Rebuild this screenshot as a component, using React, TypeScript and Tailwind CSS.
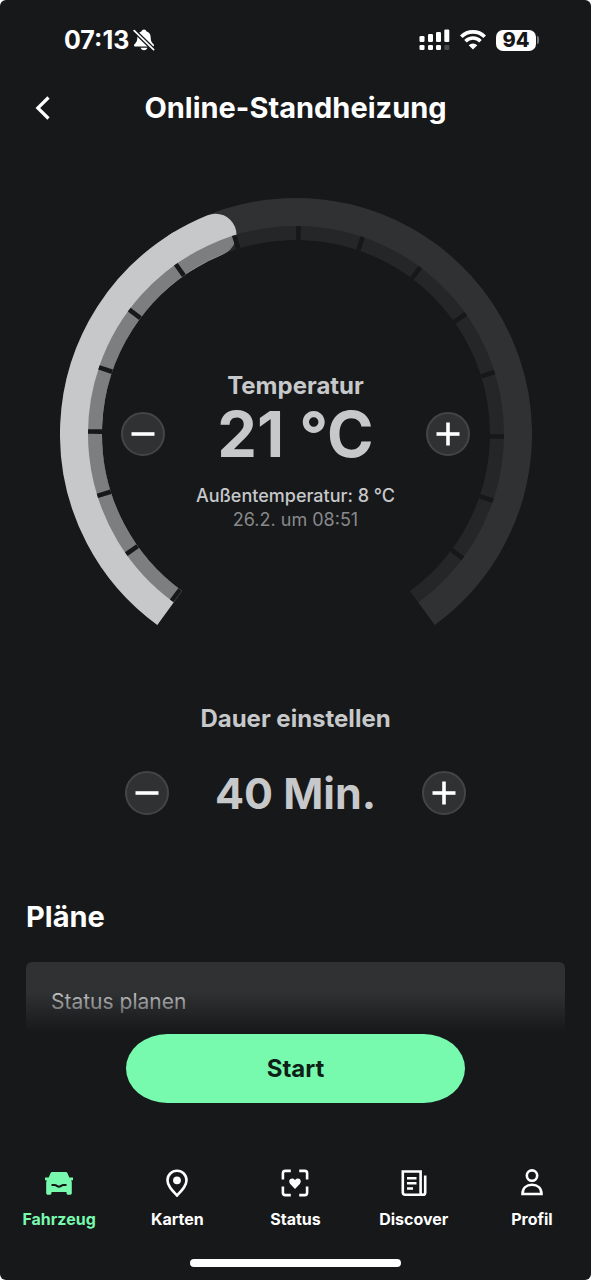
import React, { useState } from 'react';

// Gauge geometry, angles in degrees clockwise from three o'clock
const CENTER = 236;
const START_ANGLE = 126;
const END_ANGLE = 414;
const TICK_STEP = 18;

const polar = (radius: number, angle: number) => {
  const rad = (angle * Math.PI) / 180;
  return { x: CENTER + radius * Math.cos(rad), y: CENTER + radius * Math.sin(rad) };
};

const arcPath = (radius: number, from: number, to: number) => {
  const a = polar(radius, from);
  const b = polar(radius, to);
  const large = to - from > 180 ? 1 : 0;
  return `M ${a.x} ${a.y} A ${radius} ${radius} 0 ${large} 1 ${b.x} ${b.y}`;
};

const BellOffIcon: React.FC = () => (
  <svg viewBox="0 0 22 22" className="h-[22px] w-[22px]" aria-hidden="true">
    <path
      fill="#fff"
      d="M11 0.600c-1.300 0-2.100.8-2.300 1.700C5.800 3.200 4.300 5.500 4.300 8.500c0 3.300-.8 4.700-2.300 6.200-.7.7-1 1.100-1 1.600 0 .8.600 1.200 1.500 1.200h17c.9 0 1.500-.4 1.500-1.200 0-.5-.3-.9-1-1.600-1.500-1.500-2.300-2.900-2.300-6.200 0-3-1.500-5.300-4.400-6.200C13.100 1.400 12.300.6 11 .6zM7.600 18.700c.4 1.500 1.700 2.500 3.400 2.500s3-1 3.400-2.500z"
    />
    <path d="M1 1.500 20.800 20.800" stroke="#17181a" strokeWidth="4.400" />
    <path d="M1.200 1.700 20.600 20.600" stroke="#fff" strokeWidth="1.700" strokeLinecap="round" />
  </svg>
);

const SignalIcon: React.FC = () => (
  <svg viewBox="0 0 31 22" className="h-[22px] w-[31px]" fill="#fff" aria-hidden="true">
    <rect x="0.500" y="7" width="5" height="6" rx="1.200" />
    <rect x="9" y="5" width="5" height="8" rx="1.200" />
    <rect x="17" y="3" width="5" height="10" rx="1.200" />
    <rect x="25.300" y="0.500" width="5" height="12.500" rx="1.200" />
    <rect x="0.500" y="16" width="5" height="5" rx="1.200" />
    <rect x="9" y="16" width="5" height="5" rx="1.200" />
    <rect x="17" y="16" width="5" height="5" rx="1.200" />
    <rect x="25.300" y="16" width="5" height="5" rx="1.200" fill="#4a4b4d" />
  </svg>
);

const WifiIcon: React.FC = () => (
  <svg viewBox="0 0 26 20" className="h-5 w-[26px]" fill="none" stroke="#fff" aria-hidden="true">
    <path d="M1.300 6.800a16.500 16.500 0 0 1 23.400 0" strokeWidth="3.700" />
    <path d="M5.500 11.200a10.600 10.600 0 0 1 15 0" strokeWidth="3.500" />
    <path d="M13 19.600 8.700 15.200a6.100 6.100 0 0 1 8.600 0z" fill="#fff" stroke="none" />
  </svg>
);

const StatusBar: React.FC = () => (
  <div className="flex h-20 items-center justify-between pl-16 pr-[52px]">
    <div className="flex items-center gap-1">
      <span className="text-[25px] font-bold leading-8">07:13</span>
      <BellOffIcon />
    </div>
    <div className="flex items-center gap-[10px]">
      <SignalIcon />
      <WifiIcon />
      <div className="flex items-center gap-px">
        <span className="flex h-[21px] w-10 items-center justify-center rounded-[7px] bg-white text-[20px] font-extrabold leading-none text-[#17181a]">
          94
        </span>
        <span className="h-2 w-[2px] rounded-r-full bg-[#77787a]" />
      </div>
    </div>
  </div>
);

interface StepButtonProps {
  kind: 'minus' | 'plus';
  label: string;
  onClick: () => void;
}

const StepButton: React.FC<StepButtonProps> = ({ kind, label, onClick }) => (
  <button
    type="button"
    aria-label={label}
    onClick={onClick}
    className="flex h-11 w-11 shrink-0 items-center justify-center rounded-full border-2 border-[#444547] bg-[#303133]"
  >
    <svg viewBox="0 0 24 24" className="h-6 w-6" stroke="#fff" strokeWidth="3.600" aria-hidden="true">
      <path d="M0.500 12h23" />
      {kind === 'plus' && <path d="M12 0.500v23" />}
    </svg>
  </button>
);

const Gauge: React.FC<{ temperature: number }> = ({ temperature }) => {
  const valueAngle = 248 + (temperature - 21) * TICK_STEP;
  const ticks = Array.from({ length: 16 }, (_, i) => START_ANGLE + 0.7 + i * TICK_STEP);
  const capStart = Math.max(valueAngle - 10, START_ANGLE);

  return (
    <svg viewBox="0 0 472 428" className="col-start-1 row-start-1 w-full" fill="none" aria-hidden="true">
      <path d={arcPath(215, START_ANGLE, END_ANGLE)} stroke="#303133" strokeWidth="42" />
      {/* square end at the bottom, round cap at the current value */}
      <path d={arcPath(215, START_ANGLE, capStart + 1)} stroke="#c7c8ca" strokeWidth="42" />
      <path d={arcPath(215, capStart, valueAngle)} stroke="#c7c8ca" strokeWidth="42" strokeLinecap="round" />
      <path d={arcPath(201, START_ANGLE, END_ANGLE)} stroke="#17181a" strokeOpacity="0.42" strokeWidth="14" />
      {ticks.map((angle) => {
        const a = polar(194, angle);
        const b = polar(208, angle);
        return <path key={angle} d={`M ${a.x} ${a.y} L ${b.x} ${b.y}`} stroke="#17181a" strokeWidth="4.600" />;
      })}
      <path d={arcPath(201, START_ANGLE - 0.1, START_ANGLE + 0.200)} stroke="#303133" strokeWidth="14" />
    </svg>
  );
};

const CarIcon: React.FC = () => (
  <svg viewBox="0 0 28 28" className="h-7 w-7" aria-hidden="true">
    <path
      fill="#78faae"
      d="M7.200 3h13.600c.7 0 1.300.4 1.600 1.100L24.300 8.500H28v2.700h-1.800c.4.800.6 1.700.6 2.700v10c0 1.100-.7 1.800-1.800 1.800h-1.700c-1.100 0-1.800-.7-1.800-1.800v-.9h-15v.9c0 1.100-.7 1.800-1.800 1.800H3c-1.100 0-1.800-.7-1.800-1.800v-10c0-1 .2-1.900.6-2.700H0V8.500h3.700L5.600 4.100C5.900 3.400 6.500 3 7.200 3z"
    />
    <path d="M6.500 16h3.200c1.800 0 2.500 1.700 4.300 1.700s2.500-1.700 4.300-1.700h3.200" fill="none" stroke="#17181a" strokeWidth="2.200" />
  </svg>
);

const PinIcon: React.FC = () => (
  <svg viewBox="0 0 28 28" className="h-7 w-7" aria-hidden="true">
    <path
      d="M14 26.500C8.500 20.700 4.500 16.600 4.500 11.200a9.500 9.500 0 0 1 19 0c0 5.400-4 9.500-9.500 15.300z"
      fill="none"
      stroke="#fff"
      strokeWidth="2.600"
    />
    <circle cx="14" cy="11.300" r="3.900" fill="#fff" />
  </svg>
);

const StatusIcon: React.FC = () => (
  <svg viewBox="0 0 28 28" className="h-7 w-7" aria-hidden="true">
    <path
      d="M1.900 10.500V4.200q0-2.300 2.300-2.300h5.600M18.200 1.900h5.600q2.300 0 2.300 2.300v6.300M26.100 17.500v6.300q0 2.300-2.300 2.300h-5.600M9.800 26.100H4.200q-2.300 0-2.300-2.300v-6.300"
      fill="none"
      stroke="#fff"
      strokeWidth="2.600"
    />
    <path
      d="M14 20 9.200 14.900c-1.400-1.500-1.300-3.700.1-4.800 1.500-1.200 3.600-.8 4.700.9 1.100-1.700 3.200-2.100 4.700-.9 1.400 1.100 1.500 3.300.1 4.800z"
      fill="#fff"
    />
  </svg>
);

const NewsIcon: React.FC = () => (
  <svg viewBox="0 0 28 28" className="h-7 w-7" fill="none" stroke="#fff" strokeWidth="2.600" aria-hidden="true">
    <path d="M20.600 25.700H5.100q-2.300 0-2.300-2.300V2.500h17.800v20.900q0 2.300 2.300 2.300t2.300-2.300V6.500" />
    <path d="M7 9.200h9.500M7 14.200h9.500M7 19.500h6" strokeWidth="2.400" />
  </svg>
);

const ProfileIcon: React.FC = () => (
  <svg viewBox="0 0 28 28" className="h-7 w-7" fill="none" stroke="#fff" strokeWidth="2.600" aria-hidden="true">
    <circle cx="14" cy="6.600" r="5.200" />
    <path d="M4.500 25c0-5.800 4-9.200 9.500-9.200s9.500 3.400 9.500 9.200z" />
  </svg>
);

const navItems = [
  { label: 'Fahrzeug', icon: <CarIcon />, active: true },
  { label: 'Karten', icon: <PinIcon />, active: false },
  { label: 'Status', icon: <StatusIcon />, active: false },
  { label: 'Discover', icon: <NewsIcon />, active: false },
  { label: 'Profil', icon: <ProfileIcon />, active: false },
];

const BottomNav: React.FC = () => (
  <nav className="mt-[66px] grid grid-cols-5">
    {navItems.map((item) => (
      <a
        key={item.label}
        href="#"
        aria-current={item.active ? 'page' : undefined}
        className={`flex flex-col items-center gap-3 text-[16px] font-bold leading-5 ${
          item.active ? 'text-[#78faae]' : 'text-white'
        }`}
      >
        {item.icon}
        {item.label}
      </a>
    ))}
  </nav>
);

const App: React.FC = () => {
  const [temperature, setTemperature] = useState(21);
  const [duration, setDuration] = useState(40);

  return (
    <div className="min-h-screen bg-white">
      <div className="flex min-h-screen flex-col rounded-md bg-[#17181a] font-[Inter,sans-serif] text-white">
        <StatusBar />

        <header className="grid h-14 grid-cols-[56px_1fr_56px] items-center">
          <button type="button" aria-label="Zurück" className="flex justify-end pr-1">
            <svg viewBox="0 0 20 24" className="h-6 w-5" fill="none" stroke="#fff" strokeWidth="3.200" aria-hidden="true">
              <path d="M16.500 1.500 5.800 12l10.700 10.500" />
            </svg>
          </button>
          <h1 className="text-center text-[29px] font-bold leading-9">Online-Standheizung</h1>
        </header>

        <main className="flex flex-col">
          <section className="mx-auto mt-[62px] grid w-4/5 max-w-[472px] text-center text-[#c7c8ca]">
            <Gauge temperature={temperature} />
            <div className="col-start-1 row-start-1 px-[61px] pt-[172px]">
              <h2 className="text-[24px] font-bold leading-8">Temperatur</h2>
              <div className="flex h-16 items-center justify-between">
                <StepButton kind="minus" label="Temperatur senken" onClick={() => setTemperature(temperature - 1)} />
                <p className="text-[63px] font-bold leading-none">{temperature} °C</p>
                <StepButton kind="plus" label="Temperatur erhöhen" onClick={() => setTemperature(temperature + 1)} />
              </div>
              <p className="mt-[18px] text-[18px] font-medium leading-6">Außentemperatur: 8 °C</p>
              <p className="text-[18px] leading-6 text-[#88898b]">26.2. um 08:51</p>
            </div>
          </section>

          <section className="mx-auto mt-[77px] w-full max-w-[342px] text-center text-[#c7c8ca]">
            <h2 className="text-[24px] font-bold leading-8">Dauer einstellen</h2>
            <div className="mt-[26px] flex h-16 items-center justify-between">
              <StepButton kind="minus" label="Dauer verkürzen" onClick={() => setDuration(duration - 5)} />
              <p className="text-[43px] font-bold leading-none">{duration} Min.</p>
              <StepButton kind="plus" label="Dauer verlängern" onClick={() => setDuration(duration + 5)} />
            </div>
          </section>

          <section className="mt-[74px] px-[26px]">
            <h2 className="text-[29px] font-bold leading-9">Pläne</h2>
            <div className="relative mt-[27px] h-[70px] rounded-t-md bg-[#303133] px-[25px] pt-7">
              <p className="text-[21px] leading-6 text-[#c7c8ca]">Status planen</p>
              <div className="absolute inset-x-0 bottom-0 h-10 bg-linear-to-b from-transparent to-[#17181a]" />
            </div>
          </section>

          <button
            type="button"
            className="mx-auto mt-0.5 h-[69px] w-full max-w-[339px] rounded-[42px/35px] bg-[#78faae] text-[24px] font-bold leading-8 text-[#0e1f17]"
          >
            Start
          </button>
        </main>

        <BottomNav />
        <div className="mx-auto mb-[13px] mt-[30px] h-2 w-[211px] rounded-full bg-white" />
      </div>
    </div>
  );
};

export default App;
